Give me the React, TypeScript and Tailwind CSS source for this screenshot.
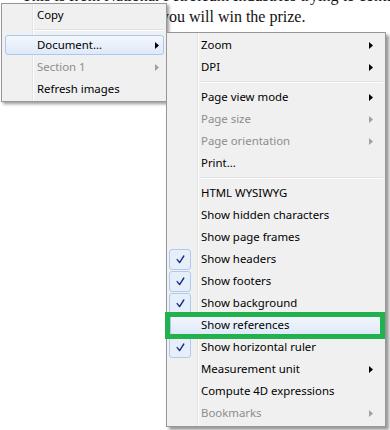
import React from 'react';

type Entry =
  | { sep: true }
  | {
      sep?: false;
      label: string;
      disabled?: boolean;
      arrow?: boolean;
      checked?: boolean;
      highlight?: boolean;
    };

const mainItems: Entry[] = [
  { label: 'Copy' },
  { sep: true },
  { label: 'Document...', arrow: true, highlight: true },
  { label: 'Section 1', arrow: true, disabled: true },
  { label: 'Refresh images' },
];

const docItems: Entry[] = [
  { label: 'Zoom', arrow: true },
  { label: 'DPI', arrow: true },
  { sep: true },
  { label: 'Page view mode', arrow: true },
  { label: 'Page size', arrow: true, disabled: true },
  { label: 'Page orientation', arrow: true, disabled: true },
  { label: 'Print...' },
  { sep: true },
  { label: 'HTML WYSIWYG' },
  { label: 'Show hidden characters' },
  { label: 'Show page frames' },
  { label: 'Show headers', checked: true },
  { label: 'Show footers', checked: true },
  { label: 'Show background', checked: true },
  { label: 'Show references', highlight: true },
  { label: 'Show horizontal ruler', checked: true },
  { label: 'Measurement unit', arrow: true },
  { label: 'Compute 4D expressions' },
  { label: 'Bookmarks', arrow: true, disabled: true },
];

// small right-pointing triangle for submenus
const Arrow: React.FC<{ disabled?: boolean }> = ({ disabled }) => (
  <svg width="4" height="7" viewBox="0 0 4 7" className={disabled ? 'text-[#a0a0a0]' : 'text-[#000]'}>
    <path d="M0 0 L4 3.5 L0 7 Z" fill="currentColor" />
  </svg>
);

const CheckBox = () => (
  <div className="w-[22px] h-[21px] rounded-[3px] border border-[#aecbef] bg-[#e6eefa] flex items-center justify-center">
    <svg width="9" height="9" viewBox="0 0 9 9">
      <path d="M1.2 4.6 L3.6 7.6 L7.8 1" fill="none" stroke="#15318a" strokeWidth="1.4" strokeLinecap="round" strokeLinejoin="round" />
    </svg>
  </div>
);

const Menu: React.FC<{ items: Entry[]; gutter: string; arrowPad: string }> = ({ items, gutter, arrowPad }) => (
  <>
    {/* gutter line */}
    <div className="absolute top-0 bottom-0 left-[30px] w-[2px] flex">
      <div className="w-px bg-[#e2e3e3]" />
      <div className="w-px bg-white" />
    </div>
    {items.map((it, i) =>
      it.sep ? (
        <div key={i} className="h-[8px] flex flex-col justify-center pl-[32px] pr-[2px]">
          <div className="h-px bg-[#e0e0e0]" />
          <div className="h-px bg-white" />
        </div>
      ) : (
        <div key={i} className="relative z-10 flex h-[22px] items-center">
          {it.highlight && (
            <div className="absolute left-[3px] right-[2px] top-[1px] bottom-[1px] rounded-[3px] border border-[#a8caf0] bg-gradient-to-b from-[#f3f7fd] to-[#dfe9f8]" />
          )}
          <div className={`relative flex self-stretch pl-[2px] pt-[1px] ${gutter}`}>{it.checked && <CheckBox />}</div>
          <span
            className={`relative flex-1 whitespace-nowrap leading-[22px] ${it.disabled ? 'text-[#8d8d8d]' : 'text-[#000]'}`}
          >
            {it.label}
          </span>
          {it.arrow && (
            <span className={`relative flex ${arrowPad}`}>
              <Arrow disabled={it.disabled} />
            </span>
          )}
        </div>
      )
    )}
  </>
);

export default function App() {
  return (
    <div className="relative w-[390px] h-[430px] overflow-hidden bg-white font-['Noto_Sans',sans-serif] text-[11.4px]">
      {/* page text behind the menus */}
      <div className="-mt-[15px] font-['Liberation_Serif',serif] text-[16px] leading-[21px] text-[#111] whitespace-nowrap">
        <p className="pl-[22px]">This is from National Petroleum Industries trying to contact</p>
        <p className="pl-[161px]">you will win the prize.</p>
      </div>

      {/* context menu */}
      <div className="absolute left-[1px] top-[3px] w-[166px] border border-[#979797] bg-[#f0f0f0] pb-[1px] shadow-[2px_2px_3px_rgba(0,0,0,0.4)]">
        <Menu items={mainItems} gutter="w-[35px]" arrowPad="pr-[7px]" />
      </div>

      {/* Document submenu */}
      <div className="absolute left-[166px] top-[32px] w-[220px] border border-[#979797] bg-[#f0f0f0] pt-[1px] pb-[2px] shadow-[3px_3px_3px_rgba(0,0,0,0.4)]">
        <Menu items={docItems} gutter="w-[34px]" arrowPad="pr-[12px]" />
      </div>

      {/* annotation frame */}
      <div className="absolute left-[165px] top-[312px] w-[220px] h-[27px] border-[5px] border-[#22b14c] z-20" />
    </div>
  );
}
